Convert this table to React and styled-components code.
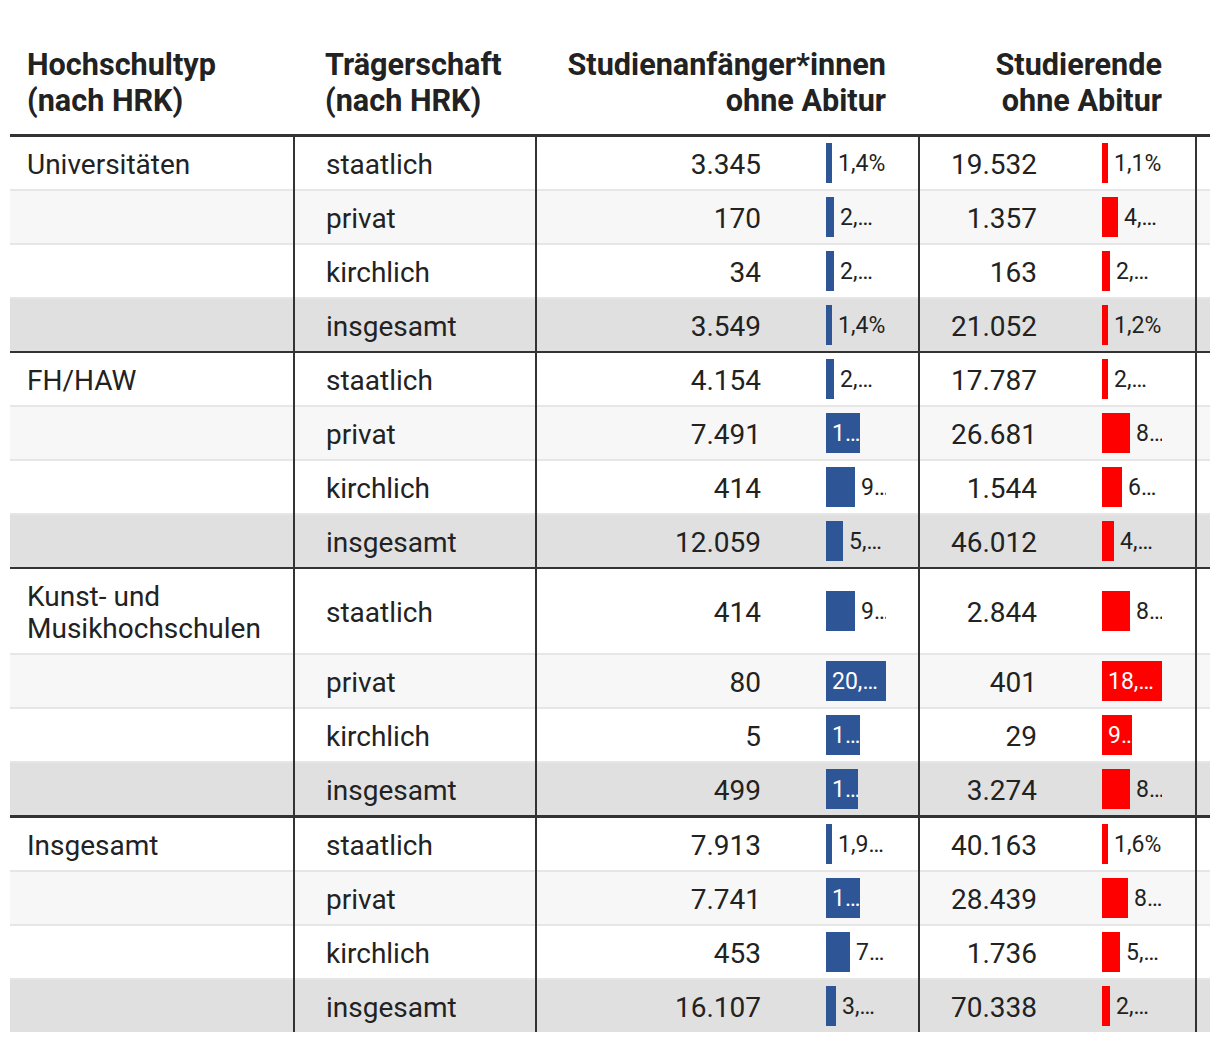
import styled, { createGlobalStyle } from "styled-components";

const GlobalStyle = createGlobalStyle`
  body {
    margin: 0;
    background: #ffffff;
    font-family: Roboto, "Liberation Sans", sans-serif;
    color: #222222;
  }
`;

const Page = styled.div`
  padding: 28px 10px 0;
`;

const Table = styled.table`
  width: 1200px;
  border-collapse: collapse;
  table-layout: fixed;
  font-size: 28px;
`;

const HeadCell = styled.th`
  font-size: 30.6px;
  font-weight: 700;
  line-height: 36px;
  vertical-align: bottom;
  text-align: ${(p) => (p.$right ? "right" : "left")};
  padding: 19px ${(p) => p.$pr || 16}px 15px ${(p) => p.$pl || 17}px;
  border-bottom: 3px solid #333333;
  color: #222222;
`;

const sepColor = {
  light: "2px solid #e6e6e6",
  group: "2px solid #333333",
  grand: "3px solid #333333",
};

const rowBg = {
  plain: "#ffffff",
  alt: "#f7f7f7",
  total: "#e0e0e0",
};

const Row = styled.tr`
  background: ${(p) => rowBg[p.$kind]};

  & > td {
    border-top: ${(p) => sepColor[p.$sep]};
  }
`;

const Cell = styled.td`
  line-height: 32px;
  padding: 12px ${(p) => p.$pr || 0}px 8px ${(p) => p.$pl || 0}px;
  vertical-align: middle;
  text-align: ${(p) => (p.$right ? "right" : "left")};
  border-right: ${(p) => (p.$divider ? "2px solid #333333" : "none")};
  white-space: ${(p) => (p.$wrap ? "normal" : "nowrap")};
`;

const BarCell = styled(Cell)`
  padding-top: 6px;
  padding-bottom: 6px;
`;

const BarWrap = styled.div`
  width: 60px;
  height: 40px;
  display: flex;
  align-items: center;
  overflow: hidden;
`;

const Bar = styled.div`
  flex-shrink: 0;
  height: 40px;
  background: ${(p) => p.$color};
  color: #ffffff;
  font-size: 23px;
  line-height: 42px;
  padding-left: 6px;
  box-sizing: border-box;
  overflow: hidden;
  white-space: nowrap;
`;

const Label = styled.span`
  flex-shrink: 0;
  margin-left: 6px;
  padding-top: 2px;
  font-size: 23px;
  white-space: nowrap;
  color: #222222;
`;

const BLUE = "#2e5596";
const RED = "#ff0000";

const groups = [
  {
    name: "Universitäten",
    sep: "light",
    rows: [
      ["staatlich", "3.345", [4, "1,4%"], "19.532", [4, "1,1%"]],
      ["privat", "170", [8, "2,…"], "1.357", [16, "4,…"]],
      ["kirchlich", "34", [8, "2,…"], "163", [8, "2,…"]],
      ["insgesamt", "3.549", [4, "1,4%"], "21.052", [4, "1,2%"]],
    ],
  },
  {
    name: "FH/HAW",
    sep: "group",
    rows: [
      ["staatlich", "4.154", [8, "2,…"], "17.787", [6, "2,…"]],
      ["privat", "7.491", [34, "1…", true], "26.681", [28, "8…"]],
      ["kirchlich", "414", [29, "9…"], "1.544", [20, "6…"]],
      ["insgesamt", "12.059", [17, "5,…"], "46.012", [12, "4,…"]],
    ],
  },
  {
    name: "Kunst- und Musikhochschulen",
    sep: "group",
    rows: [
      ["staatlich", "414", [29, "9…"], "2.844", [28, "8…"]],
      ["privat", "80", [60, "20,…", true], "401", [60, "18,…", true]],
      ["kirchlich", "5", [34, "1…", true], "29", [30, "9…", true]],
      ["insgesamt", "499", [32, "1…", true], "3.274", [28, "8…"]],
    ],
  },
  {
    name: "Insgesamt",
    sep: "grand",
    rows: [
      ["staatlich", "7.913", [6, "1,9…"], "40.163", [4, "1,6%"]],
      ["privat", "7.741", [34, "1…", true], "28.439", [26, "8…"]],
      ["kirchlich", "453", [24, "7…"], "1.736", [18, "5,…"]],
      ["insgesamt", "16.107", [10, "3,…"], "70.338", [8, "2,…"]],
    ],
  },
];

const kinds = ["plain", "alt", "plain", "total"];

function ShareBar({ color, value }) {
  const [width, text, inside] = value;
  return (
    <BarWrap>
      <Bar $color={color} style={{ width }}>
        {inside ? text : null}
      </Bar>
      {!inside && <Label>{text}</Label>}
    </BarWrap>
  );
}

export default function App() {
  return (
    <Page>
      <GlobalStyle />
      <Table>
        <colgroup>
          <col style={{ width: 284 }} />
          <col style={{ width: 242 }} />
          <col style={{ width: 257 }} />
          <col style={{ width: 126 }} />
          <col style={{ width: 150 }} />
          <col style={{ width: 127 }} />
          <col style={{ width: 14 }} />
        </colgroup>
        <thead>
          <tr>
            <HeadCell>
              Hochschultyp
              <br />
              (nach HRK)
            </HeadCell>
            <HeadCell $pl={31}>
              Trägerschaft
              <br />
              (nach HRK)
            </HeadCell>
            <HeadCell colSpan={2} $right $pr={33}>
              Studienanfänger*innen
              <br />
              ohne Abitur
            </HeadCell>
            <HeadCell colSpan={2} $right $pr={34}>
              Studierende
              <br />
              ohne Abitur
            </HeadCell>
            <HeadCell $pl={0} $pr={0} />
          </tr>
        </thead>
        <tbody>
          {groups.map((g) =>
            g.rows.map((r, i) => (
              <Row
                key={g.name + r[0]}
                $kind={kinds[i]}
                $sep={i === 0 ? g.sep : "light"}
              >
                <Cell $pl={17} $pr={12} $divider $wrap>
                  {i === 0 ? g.name : ""}
                </Cell>
                <Cell $pl={31} $divider>
                  {r[0]}
                </Cell>
                <Cell $right $pr={32}>
                  {r[1]}
                </Cell>
                <BarCell $pl={33} $divider>
                  <ShareBar color={BLUE} value={r[2]} />
                </BarCell>
                <Cell $right $pr={32}>
                  {r[3]}
                </Cell>
                <BarCell $pl={33} $divider>
                  <ShareBar color={RED} value={r[4]} />
                </BarCell>
                <Cell />
              </Row>
            ))
          )}
        </tbody>
      </Table>
    </Page>
  );
}
